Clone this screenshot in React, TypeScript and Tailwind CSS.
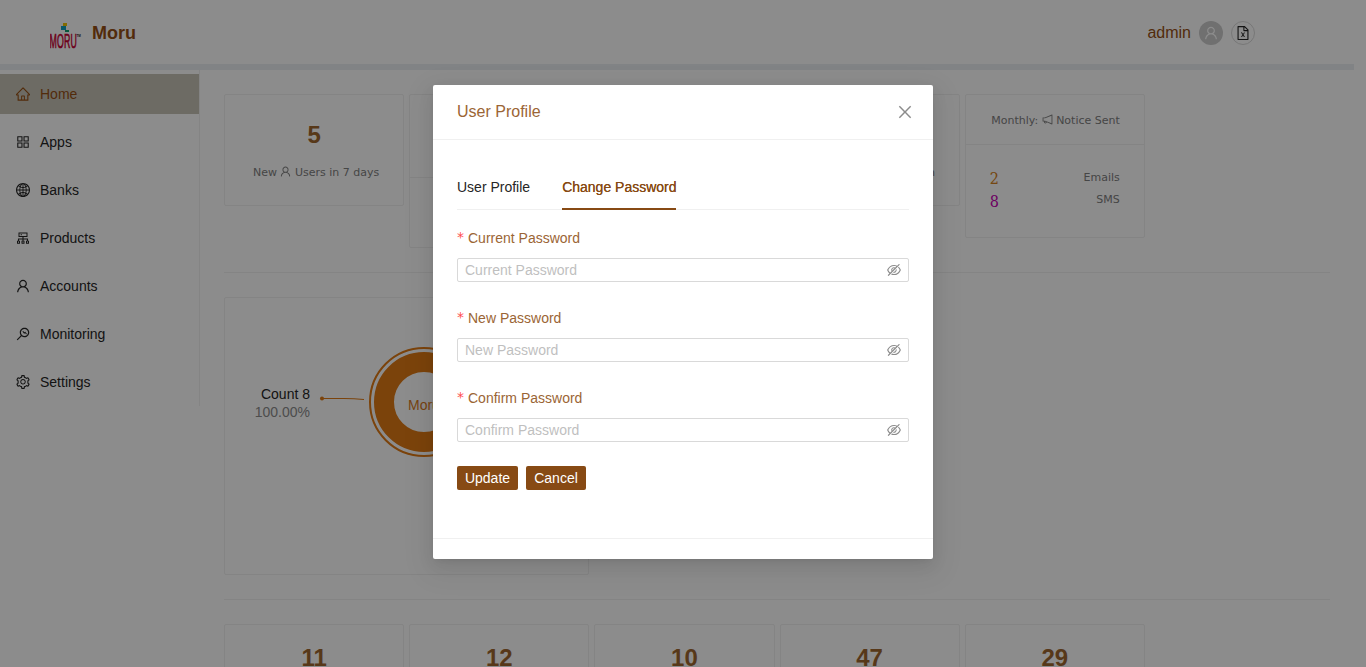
import React from "react";
import {
  AiOutlineAppstore,
  AiOutlineClose,
  AiOutlineCluster,
  AiOutlineEyeInvisible,
  AiOutlineFileExcel,
  AiOutlineGlobal,
  AiOutlineHome,
  AiOutlineMonitor,
  AiOutlineNotification,
  AiOutlineSetting,
  AiOutlineUser,
} from "react-icons/ai";

const TIGHT = "64 64 896 896";

const menu = [
  { label: "Home", Icon: AiOutlineHome },
  { label: "Apps", Icon: AiOutlineAppstore },
  { label: "Banks", Icon: AiOutlineGlobal },
  { label: "Products", Icon: AiOutlineCluster },
  { label: "Accounts", Icon: AiOutlineUser },
  { label: "Monitoring", Icon: AiOutlineMonitor },
  { label: "Settings", Icon: AiOutlineSetting },
];

const fields = ["Current Password", "New Password", "Confirm Password"];
const totals = ["11", "12", "10", "47", "29"];

function Logo() {
  return (
    <svg width="32" height="26" viewBox="0 0 32 26" className="block">
      <rect x="13" y="0" width="4" height="3" fill="#f0c400" />
      <rect x="11" y="3" width="5" height="4" fill="#10a0c0" />
      <rect x="15" y="7" width="4" height="2" fill="#10a070" />
      <g transform="translate(0 25) scale(0.55 1.27)">
        <text x="-1" y="0" fontSize="16" fill="#c80034" stroke="#c80034" strokeWidth="0.5" fontFamily="Liberation Sans, sans-serif" textLength="50" lengthAdjust="spacing">
          MORU
        </text>
      </g>
      <text x="26.5" y="14" fontSize="3" fontWeight="700" fill="#222" fontFamily="Liberation Sans, sans-serif">
        TM
      </text>
    </svg>
  );
}

function Card({ className = "", children }: { className?: string; children?: React.ReactNode }) {
  return <div className={`rounded-[2px] border border-[#f0f0f0] ${className}`}>{children}</div>;
}

function StatValue({ children }: { children: React.ReactNode }) {
  return <div className="text-2xl leading-8 font-bold text-[#9f672f]">{children}</div>;
}

function Stat({ value, children }: { value: string; children?: React.ReactNode }) {
  return (
    <Card className="h-28 pt-6 text-center">
      <StatValue>{value}</StatValue>
      <div className="mt-[11px] flex items-center justify-center pl-1 font-['DejaVu_Sans',sans-serif] text-[11px] leading-[22px] text-[#808080]">
        {children}
      </div>
    </Card>
  );
}

function Header() {
  return (
    <header className="flex h-16 items-center">
      <div className="mt-2 ml-[50px]">
        <Logo />
      </div>
      <h1 className="mt-[3px] ml-[10px] text-[18px] font-bold text-[#964f14]">Moru</h1>
      <div className="mt-[2px] mr-[111px] ml-auto flex items-center gap-2">
        <span className="text-base text-[#964f14]">admin</span>
        <span className="flex size-6 items-center justify-center rounded-full bg-[#cccccc] text-white">
          <AiOutlineUser size={14} viewBox={TIGHT} />
        </span>
        <span className="flex size-6 items-center justify-center rounded-full border border-[#d9d9d9] text-[#262626]">
          <AiOutlineFileExcel size={14} viewBox={TIGHT} />
        </span>
      </div>
    </header>
  );
}

function Sidebar() {
  return (
    <nav className="flex h-[336px] w-[200px] shrink-0 flex-col gap-2 border-r border-[#f0f0f0] pt-1">
      {menu.map(({ label, Icon }, i) => (
        <div
          key={label}
          className={`flex h-10 shrink-0 items-center gap-[10px] pl-4 text-sm ${
            i === 0 ? "bg-[#c6c4b6] text-[#964f14]" : "text-[#262626]"
          }`}
        >
          <Icon size={14} viewBox={TIGHT} />
          {label}
        </div>
      ))}
    </nav>
  );
}

function Donut() {
  return (
    <svg width="363" height="276" viewBox="225 298 363 276" className="block" fontFamily="Liberation Sans, sans-serif" fontSize="14">
      <circle cx="424" cy="402" r="54" fill="none" stroke="#e07a14" strokeWidth="2" />
      <circle cx="424" cy="402" r="40" fill="none" stroke="#e07a14" strokeWidth="20" />
      <circle cx="322" cy="398.5" r="2" fill="#e07a14" />
      <path d="M322 398.500H344Q354 398.500 364 399.500" fill="none" stroke="#e07a14" />
      <text x="310" y="399" textAnchor="end" fill="#262626">
        Count 8
      </text>
      <text x="310" y="417" textAnchor="end" fill="#8c8c8c">
        100.00%
      </text>
      <text x="408" y="410" fill="#d87a24">
        Moru
      </text>
    </svg>
  );
}

function Dashboard() {
  return (
    <main className="mr-9 ml-6 min-w-0 flex-1 pt-6">
      <section className="grid h-[178px] grid-cols-6 items-start gap-[5px]">
        <Stat value="5">
          New <AiOutlineUser size={11} viewBox={TIGHT} className="mr-1 mb-[3px] ml-[3px]" /> Users in 7 days
        </Stat>
        <Card className="h-[154px]">
          <div className="h-[83px] border-b border-[#f0f0f0]" />
        </Card>
        <Card className="h-28" />
        <Stat value="0">
          Monthly: <AiOutlineUser size={11} viewBox={TIGHT} className="mx-[3px] mb-[3px]" /> Transaction
        </Stat>
        <Card className="h-36 font-['DejaVu_Sans',sans-serif] text-[11px] text-[#808080]">
          <div className="flex h-[50px] items-center justify-end border-b border-[#f0f0f0] pt-[2px] pr-6">
            Monthly: <AiOutlineNotification size={11} viewBox={TIGHT} className="mr-[3px] mb-[2px] ml-1" /> Notice Sent
          </div>
          <div className="px-6 pt-[22px] leading-[22px]">
            <div className="flex h-[22px] justify-between">
              <span className="pt-px font-['DejaVu_Serif_Condensed','DejaVu_Serif',serif] text-base leading-[22px] text-[#d58222] [font-stretch:condensed]">
                2
              </span>
              <span>Emails</span>
            </div>
            <div className="flex h-[22px] justify-between">
              <span className="pt-[2px] font-['DejaVu_Serif_Condensed','DejaVu_Serif',serif] text-base leading-[22px] text-[#c800b4] [font-stretch:condensed]">
                8
              </span>
              <span>SMS</span>
            </div>
          </div>
        </Card>
      </section>
      <section className="grid grid-cols-6 gap-[5px] border-t border-[#f0f0f0] py-6">
        <Card className="col-span-2 h-[278px] overflow-hidden">
          <Donut />
        </Card>
      </section>
      <section className="grid grid-cols-6 gap-[5px] border-t border-[#f0f0f0] pt-6">
        {totals.map((value) => (
          <Card key={value} className="h-28 pt-[17px] text-center">
            <StatValue>{value}</StatValue>
          </Card>
        ))}
      </section>
    </main>
  );
}

function ProfileDialog() {
  return (
    <div className="absolute inset-0 flex items-start justify-center bg-black/45 pt-[85px]">
      <div
        role="dialog"
        className="h-[474px] w-[500px] rounded-[2px] bg-white shadow-[0_3px_6px_-4px_rgba(0,0,0,.12),0_6px_16px_0_rgba(0,0,0,.08),0_9px_28px_8px_rgba(0,0,0,.05)]"
      >
        <div className="flex h-[55px] items-center justify-between border-b border-[#f0f0f0] pr-5 pl-6">
          <h2 className="text-base leading-[22px] text-[#9b6535]">User Profile</h2>
          <button aria-label="Close" className="text-[#8c8c8c]">
            <AiOutlineClose size={16} viewBox={TIGHT} />
          </button>
        </div>
        <div className="h-[399px] border-b border-[#f0f0f0] p-6 text-sm">
          <div className="mb-4 flex h-[46px] gap-8 border-b border-[#f0f0f0] leading-[46px]">
            <span className="text-[#262626]">User Profile</span>
            <span className="h-[46px] w-[114px] border-b-2 border-[#874a14] whitespace-nowrap text-[#874a14] [text-shadow:0_0_0.25px_currentColor]">
              Change Password
            </span>
          </div>
          {fields.map((field) => (
            <div key={field} className="mb-6">
              <div className="mb-2 flex h-6 items-center text-[#9b6535]">
                <span className="mr-1 pb-[2px] font-['DejaVu_Sans',sans-serif] text-[#ff4d4f]">*</span>
                {field}
              </div>
              <div className="flex h-6 items-center rounded-[2px] border border-[#d9d9d9] px-[7px]">
                <input
                  type="password"
                  placeholder={field}
                  className="min-w-0 flex-1 leading-[22px] outline-none placeholder:text-[#bfbfbf]"
                />
                <AiOutlineEyeInvisible size={14} viewBox={TIGHT} className="text-[#8c8c8c]" />
              </div>
            </div>
          ))}
          <div className="flex gap-2 text-white">
            <button className="h-6 w-[61px] rounded-[2px] bg-[#874a14]">Update</button>
            <button className="h-6 w-[60px] rounded-[2px] bg-[#874a14]">Cancel</button>
          </div>
        </div>
      </div>
    </div>
  );
}

export default function App() {
  return (
    <div className="relative h-[667px] w-[1366px] overflow-hidden bg-white font-['Liberation_Sans',Arial,sans-serif] text-sm">
      <Header />
      <div className="mr-3 h-[6px] bg-[#ebeef3]" />
      <div className="flex">
        <Sidebar />
        <Dashboard />
      </div>
      <ProfileDialog />
    </div>
  );
}
